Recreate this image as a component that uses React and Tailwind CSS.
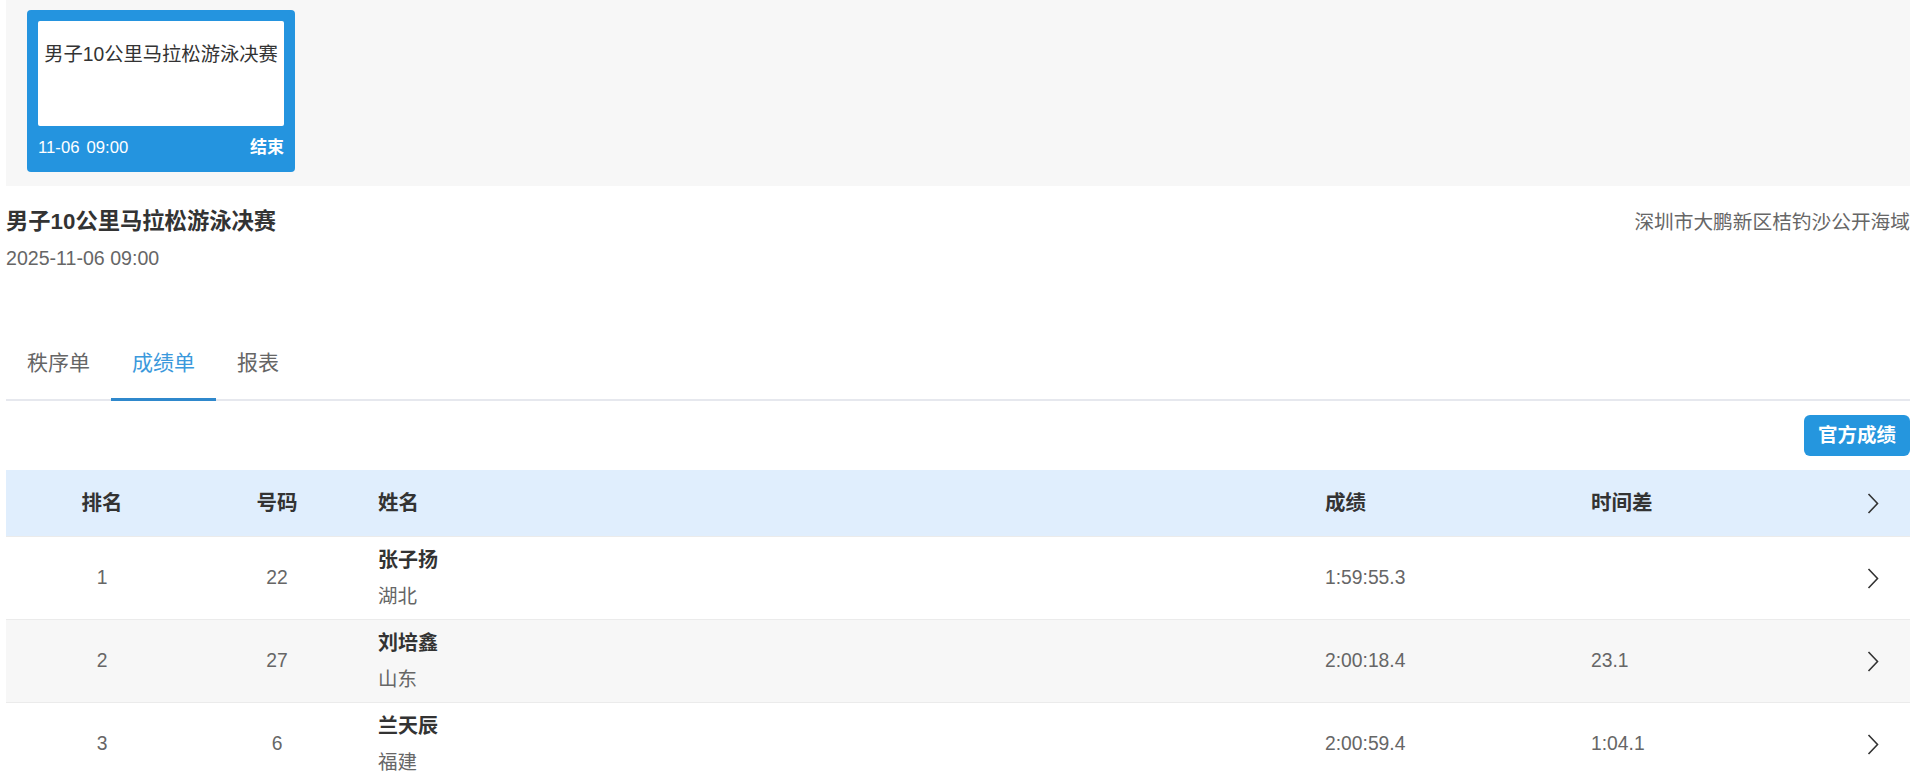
import React from "react";

const FONT = { fontFamily: '"Liberation Sans", "Noto Sans CJK SC", sans-serif' };

function Chevron() {
  return (
    <svg width="12" height="21" viewBox="0 0 12 21" fill="none" className="block">
      <polyline points="1.5,1 10.5,10.5 1.5,20" stroke="#333" strokeWidth="1.6" strokeLinejoin="miter" />
    </svg>
  );
}

const rows = [
  { rank: "1", no: "22", name: "张子扬", prov: "湖北", res: "1:59:55.3", diff: "" },
  { rank: "2", no: "27", name: "刘培鑫", prov: "山东", res: "2:00:18.4", diff: "23.1" },
  { rank: "3", no: "6", name: "兰天辰", prov: "福建", res: "2:00:59.4", diff: "1:04.1" },
];

export default function App() {
  return (
    <div className="min-h-screen bg-white pl-[6px] pr-[20px] text-[#333]" style={FONT}>
      {/* top gray strip with event card */}
      <div className="bg-[#f7f7f7] h-[186px] pl-[21px] pt-[10px]">
        <div className="w-[268px] h-[162px] rounded-[4px] bg-[#2494df] px-[11px] pt-[11px] flex flex-col">
          <div className="h-[105px] bg-white rounded-[2px] pt-[20px] text-center text-[19.3px] leading-[28px] text-[#333] whitespace-nowrap">
            男子10公里马拉松游泳决赛
          </div>
          <div className="flex-1 flex items-center justify-between pb-[2px] text-white">
            <div className="flex gap-[7px] text-[16.7px]">
              <span>11-06</span>
              <span>09:00</span>
            </div>
            <span className="font-bold text-[17px]">结束</span>
          </div>
        </div>
      </div>

      {/* title block */}
      <div className="mt-[18px] flex justify-between">
        <div>
          <div className="text-[22.3px] leading-[36px] font-bold text-[#333]">男子10公里马拉松游泳决赛</div>
          <div className="text-[19.6px] leading-[36px] text-[#666]">2025-11-06 09:00</div>
        </div>
        <div className="text-[19.7px] leading-[36px] text-[#666]">深圳市大鹏新区桔钓沙公开海域</div>
      </div>

      {/* tabs */}
      <div className="mt-[52px] flex shadow-[inset_0_-2px_0_#e6e8ee]">
        <div className="h-[73px] px-[21px] flex items-center border-b-[3px] border-transparent text-[21px] text-[#666]">秩序单</div>
        <div className="h-[73px] px-[21px] flex items-center border-b-[3px] border-[#2f88cc] text-[21px] text-[#3b99dc]">成绩单</div>
        <div className="h-[73px] px-[21px] flex items-center border-b-[3px] border-transparent text-[21px] text-[#666]">报表</div>
      </div>

      {/* action button */}
      <div className="mt-[14px] flex justify-end">
        <div className="h-[41px] w-[106px] rounded-[6px] bg-[#2596de] flex items-center justify-center text-white font-bold text-[19.5px]">
          官方成绩
        </div>
      </div>

      {/* table */}
      <div className="mt-[14px]">
        <div className="grid grid-cols-[192px_158px_1fr_266px_266px_75px] h-[66px] items-center bg-[#e0eefd] font-bold text-[20.5px] text-[#333]">
          <div className="text-center">排名</div>
          <div className="text-center">号码</div>
          <div className="pl-[22px]">姓名</div>
          <div className="pl-[22px]">成绩</div>
          <div className="pl-[22px]">时间差</div>
          <div className="flex justify-center"><Chevron /></div>
        </div>
        {rows.map((r, i) => (
          <div
            key={r.rank}
            className={
              "grid grid-cols-[192px_158px_1fr_266px_266px_75px] items-center pt-[5px] pb-[5px] border-t border-[#ebebeb] first:border-t-0 text-[19.3px] text-[#666] " +
              (i % 2 === 1 ? "bg-[#f7f7f7]" : "bg-white")
            }
          >
            <div className="text-center">{r.rank}</div>
            <div className="text-center">{r.no}</div>
            <div className="pl-[22px]">
              <div className="leading-[36px] font-bold text-[20px] text-[#333]">{r.name}</div>
              <div className="leading-[36px] text-[19.5px] text-[#666]">{r.prov}</div>
            </div>
            <div className="pl-[22px]">{r.res}</div>
            <div className="pl-[22px]">{r.diff}</div>
            <div className="flex justify-center"><Chevron /></div>
          </div>
        ))}
      </div>
    </div>
  );
}
